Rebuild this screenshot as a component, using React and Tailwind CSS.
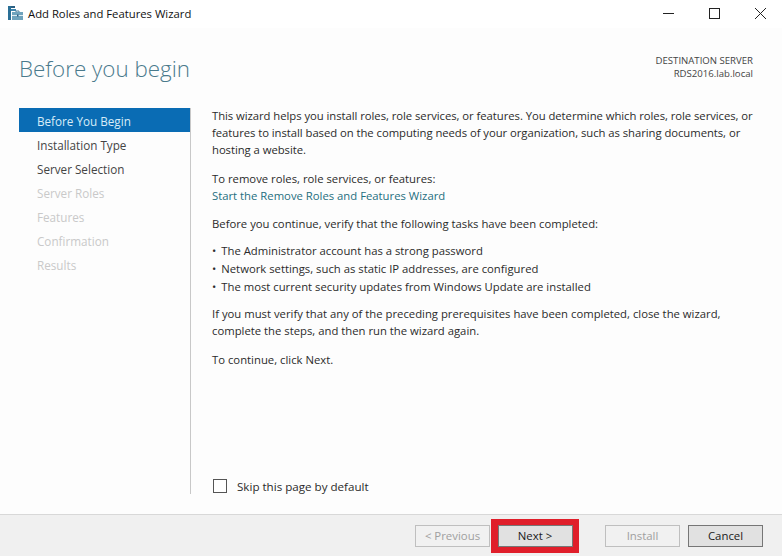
const font = { fontFamily: '"Open Sans", "Noto Sans", sans-serif' };

const steps = [
  { label: 'Before You Begin', state: 'active' },
  { label: 'Installation Type', state: 'normal' },
  { label: 'Server Selection', state: 'normal' },
  { label: 'Server Roles', state: 'off' },
  { label: 'Features', state: 'off' },
  { label: 'Confirmation', state: 'off' },
  { label: 'Results', state: 'off' },
];

function WizardIcon() {
  return (
    <svg width="16" height="16" viewBox="0 0 16 16" className="shrink-0">
      <rect x="1" y="0" width="7" height="2" fill="#2a5f82" />
      <rect x="1" y="0" width="3" height="14" fill="#2a6f96" />
      <rect x="4" y="3" width="5" height="2" fill="#3f86ad" />
      <path d="M9 6.5V5h3v1.5" fill="none" stroke="#4a7f9c" strokeWidth="1" />
      <rect x="5" y="6" width="11" height="8" fill="#6fa3bd" />
      <rect x="5" y="9" width="11" height="1" fill="#dcebf2" />
      <rect x="10" y="8.5" width="1.5" height="2" fill="#2a5f82" />
    </svg>
  );
}

function WindowButtons() {
  return (
    <div className="flex items-center">
      <svg width="46" height="28" viewBox="0 0 46 28">
        <path d="M19 13.5h11" stroke="#222" strokeWidth="1" />
      </svg>
      <svg width="46" height="28" viewBox="0 0 46 28">
        <rect x="19.5" y="8.5" width="10" height="10" fill="none" stroke="#222" strokeWidth="1" />
      </svg>
      <svg width="46" height="28" viewBox="0 0 46 28">
        <path d="M19 8l11 11M30 8L19 19" stroke="#222" strokeWidth="1" fill="none" />
      </svg>
    </div>
  );
}

function FooterButton({ children, disabled }) {
  return (
    <button
      type="button"
      className={`h-[22px] w-[75px] border text-[11.4px] ${
        disabled
          ? 'border-[#bfbfbf] bg-[#f1f1f1] text-[#a0a0a0]'
          : 'border-[#767676] bg-[#e1e1e1] text-[#1a1a1a]'
      }`}
    >
      {children}
    </button>
  );
}

export default function App() {
  return (
    <div className="flex h-[556px] w-[782px] flex-col overflow-hidden bg-white text-[11.3px] text-[#333]" style={font}>
      {/* Title bar */}
      <div className="flex h-[28px] items-center justify-between">
        <div className="flex items-center gap-[5px] pl-[7px] text-[11.3px] text-[#111]">
          <WizardIcon />
          <span>Add Roles and Features Wizard</span>
        </div>
        <WindowButtons />
      </div>

      <div className="flex min-h-0 flex-1 flex-col bg-[#fdfdfd]">
        {/* Header */}
        <div className="flex h-[80px] justify-between pl-[19px] pr-[29px]">
          <h1 className="mt-[21px] text-[22.4px] font-light leading-[40px] text-[#4a7a8c]">Before you begin</h1>
          <div className="mt-[26px] text-right text-[9.6px] leading-[13px] text-[#444]">
            <div>DESTINATION SERVER</div>
            <div>RDS2016.lab.local</div>
          </div>
        </div>

        <div className="flex min-h-0 flex-1 pb-[18px]">
          {/* Steps */}
          <nav className="mb-[2px] ml-[19px] w-[172px] shrink-0 border-r border-[#c8c8c8] text-[11.7px]">
            {steps.map((step) => (
              <div
                key={step.label}
                className={`flex h-[24px] items-center pl-[18px] pt-[3px] ${
                  step.state === 'active'
                    ? 'bg-[#0a6cb4] text-[#d8ecf8]'
                    : step.state === 'normal'
                      ? 'text-[#444]'
                      : 'text-[#c9c9c9]'
                }`}
              >
                {step.label}
              </div>
            ))}
          </nav>

          {/* Body */}
          <div className="flex min-w-0 flex-1 flex-col pl-[21px] pr-[20px] leading-[17px] text-[#2b2b2b]">
            <div className="-mt-[1px] flex-1">
              <p className="whitespace-nowrap tracking-[-0.05px]">
                This wizard helps you install roles, role services, or features. You determine which roles, role services, or
                <br />
                features to install based on the computing needs of your organization, such as sharing documents, or
                <br />
                hosting a website.
              </p>
              <p className="mt-[12px]">To remove roles, role services, or features:</p>
              <p className="text-[#1f6f7f]">Start the Remove Roles and Features Wizard</p>
              <p className="mt-[11px]">Before you continue, verify that the following tasks have been completed:</p>
              <ul className="mt-[10px] space-y-[1px]">
                <li className="flex gap-[5px]"><span>•</span>The Administrator account has a strong password</li>
                <li className="flex gap-[5px]"><span>•</span>Network settings, such as static IP addresses, are configured</li>
                <li className="flex gap-[5px]"><span>•</span>The most current security updates from Windows Update are installed</li>
              </ul>
              <p className="mt-[10px]">
                If you must verify that any of the preceding prerequisites have been completed, close the wizard,
                <br />
                complete the steps, and then run the wizard again.
              </p>
              <p className="mt-[12px]">To continue, click Next.</p>
            </div>
            <label className="flex h-[20px] items-center gap-[10px] pl-[1px] text-[11.6px]">
              <span className="h-[14px] w-[14px] border border-[#555] bg-white" />
              <span>Skip this page by default</span>
            </label>
          </div>
        </div>

        {/* Footer */}
        <div className="flex h-[42px] items-center border-t border-[#d8d8d8] bg-[#f0f0f0] pl-[415px] pt-[1px]">
          <FooterButton disabled>&lt; Previous</FooterButton>
          <div className="ml-[1px] flex h-[34px] w-[88px] items-center justify-center bg-[#e01e2a]">
            <FooterButton>Next &gt;</FooterButton>
          </div>
          <div className="ml-[26px] flex gap-[8px]">
            <FooterButton disabled>Install</FooterButton>
            <FooterButton>Cancel</FooterButton>
          </div>
        </div>
      </div>
    </div>
  );
}
